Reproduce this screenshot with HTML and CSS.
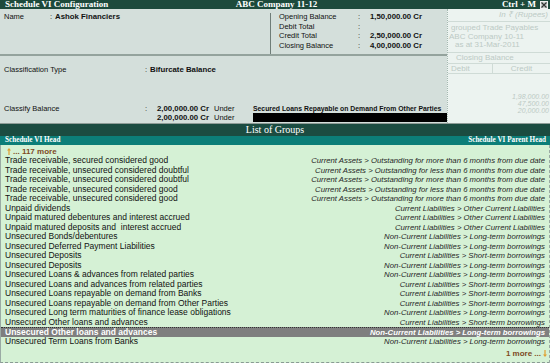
FILE: index.html
```html
<!DOCTYPE html>
<html lang="en">
<head>
<meta charset="utf-8">
<title>Schedule VI Configuration</title>
<link rel="stylesheet" href="styles.css">
</head>
<body>
<div class="screen">
  <header class="titlebar">
    <span class="t-left">Schedule VI Configuration</span>
    <span class="t-center">ABC Company 11-12</span>
    <span class="t-right">Ctrl + M <span class="close"><svg width="6" height="6" viewBox="0 0 6 6"><path d="M0.5 0.5L5.5 5.5M5.5 0.5L0.5 5.5" stroke="#333" stroke-width="1.2"/></svg></span></span>
  </header>

  <section class="form">
    <div class="main">
      <div class="top">
        <div class="namebox">
          <span class="n-lbl">Name</span><span class="n-colon">:</span><b class="val">Ashok Financiers</b>
        </div>
        <div class="balbox">
          <div class="bal-row"><span class="b-lbl">Opening Balance</span><span class="b-colon">:</span><b class="val">1,50,000.00 Cr</b></div>
          <div class="bal-row"><span class="b-lbl">Debit Total</span><span class="b-colon">:</span><b class="val"></b></div>
          <div class="bal-row"><span class="b-lbl">Credit Total</span><span class="b-colon">:</span><b class="val">2,50,000.00 Cr</b></div>
          <div class="bal-row"><span class="b-lbl">Closing Balance</span><span class="b-colon">:</span><b class="val">4,00,000.00 Cr</b></div>
        </div>
      </div>
      <div class="ctype">
        <span class="c-lbl">Classification Type</span><span class="c-colon">:</span><b class="val">Bifurcate Balance</b>
      </div>
      <div class="classify">
        <div class="cl-row">
          <span class="c-lbl">Classify Balance</span><span class="c-colon2">:</span><b class="amt">2,00,000.00 Cr</b><span class="under">Under</span><b class="ledger">Secured Loans Repayable on Demand From Other Parties</b>
        </div>
        <div class="cl-row">
          <span class="c-lbl"></span><span class="c-colon2"></span><b class="amt">2,00,000.00 Cr</b><span class="under">Under</span><span class="ledger blackbar"></span>
        </div>
      </div>
    </div>
    <aside class="ghost">
      <div class="g-cur">In ₹ (Rupees)</div>
      <div class="g-lines">
        <div class="g1">grouped Trade Payables</div>
        <div class="g2">ABC Company 10-11</div>
        <div class="g3">as at 31-Mar-2011</div>
      </div>
      <div class="g-close">Closing Balance</div>
      <div class="g-dc"><span class="g-d">Debit</span><span class="g-c">Credit</span></div>
      <div class="g-vals">
        <div>1,98,000.00</div>
        <div>47,500.00</div>
        <div>20,000.00</div>
      </div>
    </aside>
  </section>

  <section class="list">
    <div class="list-title">List of Groups</div>
    <div class="list-head"><span>Schedule VI Head</span><span>Schedule VI Parent Head</span></div>
    <div class="rows">
      <div class="more-top"><svg class="arr" width="4" height="7" viewBox="0 0 4 7"><path d="M2 0L4 2.5H2.6V7H1.4V2.5H0Z" fill="#e0a030"/></svg><b>... 117 more</b></div>
      <div class="row"><span>Trade receivable, secured considered good</span><i>Current Assets &gt; Outstanding for more than 6 months from due date</i></div>
      <div class="row"><span>Trade receivable, unsecured considered doubtful</span><i>Current Assets &gt; Outstanding for less than 6 months from due date</i></div>
      <div class="row"><span>Trade receivable, unsecured considered doubtful</span><i>Current Assets &gt; Outstanding for more than 6 months from due date</i></div>
      <div class="row"><span>Trade receivable, unsecured considered good</span><i>Current Assets &gt; Outstanding for less than 6 months from due date</i></div>
      <div class="row"><span>Trade receivable, unsecured considered good</span><i>Current Assets &gt; Outstanding for more than 6 months from due date</i></div>
      <div class="row"><span>Unpaid dividends</span><i>Current Liabilities &gt; Other Current Liabilities</i></div>
      <div class="row"><span>Unpaid matured debentures and interest accrued</span><i>Current Liabilities &gt; Other Current Liabilities</i></div>
      <div class="row"><span>Unpaid matured deposits and&nbsp; interest accrued</span><i>Current Liabilities &gt; Other Current Liabilities</i></div>
      <div class="row"><span>Unsecured Bonds/debentures</span><i>Non-Current Liabilities &gt; Long-term borrowings</i></div>
      <div class="row"><span>Unsecured Deferred Payment Liabilities</span><i>Non-Current Liabilities &gt; Long-term borrowings</i></div>
      <div class="row"><span>Unsecured Deposits</span><i>Current Liabilities &gt; Short-term borrowings</i></div>
      <div class="row"><span>Unsecured Deposits</span><i>Non-Current Liabilities &gt; Long-term borrowings</i></div>
      <div class="row"><span>Unsecured Loans &amp; advances from related parties</span><i>Non-Current Liabilities &gt; Long-term borrowings</i></div>
      <div class="row"><span>Unsecured Loans and advances from related parties</span><i>Current Liabilities &gt; Short-term borrowings</i></div>
      <div class="row"><span>Unsecured Loans repayable on demand from Banks</span><i>Current Liabilities &gt; Short-term borrowings</i></div>
      <div class="row"><span>Unsecured Loans repayable on demand from Other Parties</span><i>Current Liabilities &gt; Short-term borrowings</i></div>
      <div class="row"><span>Unsecured Long term maturities of finance lease obligations</span><i>Non-Current Liabilities &gt; Long-term borrowings</i></div>
      <div class="row"><span>Unsecured Other loans and advances</span><i>Current Liabilities &gt; Short-term borrowings</i></div>
      <div class="row selected"><span>Unsecured Other loans and advances</span><i>Non-Current Liabilities &gt; Long-term borrowings</i></div>
      <div class="row"><span>Unsecured Term Loans from Banks</span><i>Non-Current Liabilities &gt; Long-term borrowings</i></div>
      <div class="more-bottom"><b>1 more ...</b><svg class="arr" width="4" height="7" viewBox="0 0 4 7"><path d="M2 7L4 4.5H2.6V0H1.4V4.5H0Z" fill="#e0a030"/></svg></div>
    </div>
  </section>
</div>
</body>
</html>
```

FILE: styles.css
```css
* { box-sizing: border-box; margin: 0; padding: 0; }
html, body { width: 550px; height: 363px; overflow: hidden; background: #d5f1d5; }
body { font-family: "Liberation Sans", Arial, sans-serif; color: #111; }

.screen { width: 550px; height: 363px; display: flex; flex-direction: column; }

/* title bar */
.titlebar {
  height: 9px; background: #1d4a3c; color: #fff;
  display: grid; grid-template-columns: 1fr auto 1fr; align-items: center;
  font: bold 9px/9px "Liberation Serif", serif; padding: 0 2px 0 5px;
  white-space: nowrap;
}
.t-left { justify-self: start; }
.t-right { justify-self: end; display: flex; align-items: center; gap: 4px; }
.close {
  width: 8px; height: 8px; background: #c8cfcc; border: 1px solid #f0f0f0;
  display: flex; align-items: center; justify-content: center;
}

/* form */
.form { height: 115px; display: flex; border-bottom: 1px solid #8e9c97; }
.main { width: 447px; background: #d4dfdb; font-size: 7.5px; white-space: nowrap; }
.val { font-size: 7.8px; font-weight: bold; }

.top { height: 47px; display: flex; border-bottom: 2px solid #94a39d; }
.namebox {
  width: 271px; margin-top: 4px; border-right: 1px solid #6f7d78;
  display: flex; align-items: flex-start; line-height: 8px; padding: 0 0 0 4px;
}
.n-lbl { width: 46px; }
.n-colon { width: 5px; }

.balbox { flex: 1; padding: 3px 0 0 8px; }
.bal-row { display: flex; height: 9.5px; line-height: 9.5px; align-items: center; }
.b-lbl { width: 79px; }
.b-colon { width: 12px; }

.ctype { display: flex; margin-top: 9px; line-height: 10px; padding-left: 4px; align-items: center; }
.c-lbl { width: 141px; }
.c-colon { width: 5px; }

.classify { margin-top: 28.5px; padding-left: 4px; }
.cl-row { display: flex; height: 9px; line-height: 9px; align-items: center; }
.c-colon2 { width: 12px; }
.amt { width: 57px; font-size: 7.8px; }
.under { width: 39px; }
.ledger { width: 194px; font-size: 6.85px; }
.blackbar { height: 9px; background: #000; }

/* ghost background window */
.ghost {
  flex: 1; background: #ecf3f0; border-left: 1px dotted #a4b8b0;
  color: #bccac5; font-size: 8px; white-space: nowrap; overflow: hidden;
}
.g-cur {
  height: 13px; line-height: 12px; border-bottom: 1px solid #cfdbd6;
  text-align: right; font-style: italic; padding-right: 2px; font-size: 8px;
}
.g-lines { line-height: 8.5px; padding: 2.2px 0 2.3px; border-bottom: 1px solid #cfdbd6; }
.g1 { padding-left: 3px; }
.g2 { padding-left: 1px; }
.g3 { padding-left: 7px; }
.g-close { height: 11px; line-height: 10px; padding-left: 8px; border-bottom: 1px solid #cfdbd6; }
.g-dc { display: flex; height: 10px; line-height: 9px; border-bottom: 1px solid #cfdbd6; }
.g-d { width: 45px; padding-left: 3px; border-right: 1px solid #cfdbd6; }
.g-c { flex: 1; text-align: center; }
.g-vals { margin-top: 19px; line-height: 7px; font-size: 7px; font-style: italic; text-align: right; padding-right: 1px; }

/* list */
.list { flex: 1; display: flex; flex-direction: column; }
.list-title {
  height: 12px; line-height: 12px; background: #1b4c41; color: #fff;
  text-align: center; font: 10px/12px "Liberation Serif", serif;
}
.list-head {
  height: 9px; background: #0c7e78; color: #fff;
  display: flex; justify-content: space-between; align-items: center;
  padding: 0 4px 0 5px; font: bold 7.2px/9px "Liberation Serif", serif;
}
.rows {
  flex: 1; display: flex; flex-direction: column; padding-top: 1.5px;
  border-left: 1px solid #9aaaa4; border-right: 1px dashed #9aaaa4; border-bottom: 1px dashed #8a9a94;
  white-space: nowrap;
}
.row {
  display: flex; justify-content: space-between; align-items: center;
  height: 9.5px; line-height: 9.5px; padding: 0 4px;
  font-size: 8.5px;
}
.row i { font-size: 7.75px; color: #262626; }
.row.selected { background: #7f7f7f; color: #fff; font-weight: bold; border-top: 1px dotted #333; }
.row.selected i { color: #fff; }

.more-top, .more-bottom {
  display: flex; align-items: center; height: 9.5px; line-height: 9.5px;
  font-size: 8px; color: #7e4a1e;
}
.more-top { padding-left: 6px; gap: 2px; }
.more-bottom { margin-top: auto; margin-bottom: 3.5px; justify-content: flex-end; padding-right: 2px; gap: 2px; }
```
